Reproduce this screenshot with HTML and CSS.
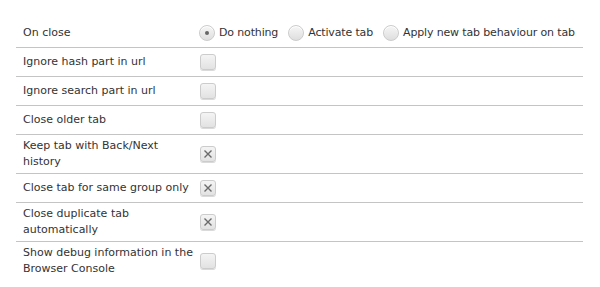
FILE: index.html
```html
<!DOCTYPE html>
<html>
<head>
<meta charset="utf-8">
<link rel="stylesheet" href="styles.css">
</head>
<body>
<div class="settings">
  <div class="row">
    <div class="label">On close</div>
    <div class="control radios">
      <span class="opt"><span class="radio on"></span><span>Do nothing</span></span>
      <span class="opt"><span class="radio"></span><span>Activate tab</span></span>
      <span class="opt"><span class="radio"></span><span>Apply new tab behaviour on tab</span></span>
    </div>
  </div>
  <div class="row">
    <div class="label">Ignore hash part in url</div>
    <div class="control"><span class="check"></span></div>
  </div>
  <div class="row">
    <div class="label">Ignore search part in url</div>
    <div class="control"><span class="check"></span></div>
  </div>
  <div class="row">
    <div class="label">Close older tab</div>
    <div class="control"><span class="check"></span></div>
  </div>
  <div class="row">
    <div class="label">Keep tab with Back/Next history</div>
    <div class="control"><span class="check on"><svg viewBox="0 0 16 16" width="16" height="16"><path d="M4.5 4.5 L11.5 11.5 M11.5 4.5 L4.5 11.5" stroke="#6a6a6a" stroke-width="1.4" fill="none"/></svg></span></div>
  </div>
  <div class="row">
    <div class="label">Close tab for same group only</div>
    <div class="control"><span class="check on"><svg viewBox="0 0 16 16" width="16" height="16"><path d="M4.5 4.5 L11.5 11.5 M11.5 4.5 L4.5 11.5" stroke="#6a6a6a" stroke-width="1.4" fill="none"/></svg></span></div>
  </div>
  <div class="row">
    <div class="label">Close duplicate tab automatically</div>
    <div class="control"><span class="check on"><svg viewBox="0 0 16 16" width="16" height="16"><path d="M4.5 4.5 L11.5 11.5 M11.5 4.5 L4.5 11.5" stroke="#6a6a6a" stroke-width="1.4" fill="none"/></svg></span></div>
  </div>
  <div class="row last">
    <div class="label">Show debug information in the Browser Console</div>
    <div class="control"><span class="check"></span></div>
  </div>
</div>
</body>
</html>
```
FILE: styles.css
```css
html, body {
  margin: 0;
  padding: 0;
  background: #ffffff;
}
body {
  font-family: "DejaVu Sans", sans-serif;
  font-size: 11px;
  line-height: 16px;
  color: #333333;
}
.settings {
  padding: 19px 0 0 16px;
  width: 567px;
}
.row {
  display: grid;
  grid-template-columns: 172px 1fr;
  column-gap: 5px;
  align-items: center;
  min-height: 22px;
  padding: 3px 0 3px 7px;
  border-bottom: 1px solid #c4c4c4;
}
.row.last {
  border-bottom: none;
}
.control {
  display: flex;
  align-items: center;
  white-space: nowrap;
}
.radios {
  gap: 10px;
  margin-left: -1px;
  letter-spacing: -0.15px;
}
.opt {
  display: flex;
  align-items: center;
  gap: 4px;
}
.radio {
  flex: none;
  width: 14px;
  height: 14px;
  border-radius: 50%;
  border: 1px solid #cccccc;
  background: linear-gradient(#f6f6f6, #dedede);
  box-shadow: inset 0 1px 0 #ffffff;
  position: relative;
}
.radio.on::after {
  content: "";
  position: absolute;
  left: 5px;
  top: 5px;
  width: 4px;
  height: 4px;
  border-radius: 50%;
  background: #666666;
}
.check {
  flex: none;
  width: 14px;
  height: 14px;
  border-radius: 3px;
  border: 1px solid #cccccc;
  background: linear-gradient(#f4f4f4, #e2e2e2);
  box-shadow: 0 1px 0 #dadada;
  position: relative;
}
.check svg {
  position: absolute;
  left: -1px;
  top: -1px;
}
```
